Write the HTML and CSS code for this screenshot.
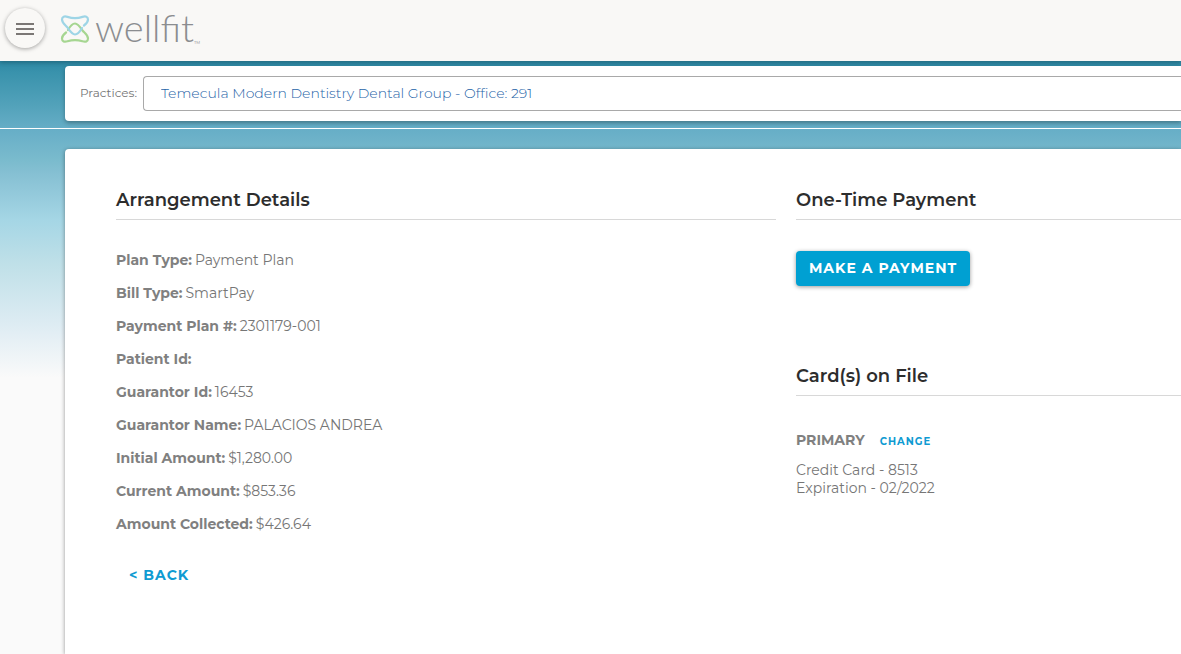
FILE: index.html
```html
<!DOCTYPE html>
<html lang="en">
<head>
<meta charset="utf-8">
<meta name="viewport" content="width=device-width, initial-scale=1">
<title>Wellfit - Arrangement Details</title>
<link rel="stylesheet" href="styles.css">
</head>
<body>
<header class="topbar">
  <button class="menu-button" type="button" aria-label="Open menu">
    <svg width="18" height="12" viewBox="0 0 18 12" aria-hidden="true"><path d="M0 0h18v2H0zM0 5h18v2H0zM0 10h18v2H0z" fill="#7b7775"/></svg>
  </button>
  <a class="brand" href="#" aria-label="wellfit home">
    <svg class="brand-mark" width="30" height="28" viewBox="0 0 30 28" fill="none" stroke-width="2.200" stroke-linecap="round" aria-hidden="true">
      <path stroke="#a6d691" d="M8 15C10 11.500 12 8.500 15 8.500C18 8.500 20.500 12.500 22.500 15.500C24.500 18 28 20 28 23.500C28 26.500 25.500 27.300 22.500 26.300C17 24.500 13 24.500 7.500 26.300C4.500 27.300 2 26.500 2 23.500C2 20.500 4 19 6 17.500"/>
      <path stroke="#9ed5e6" d="M22 13C20 16.500 18 19.500 15 19.500C12 19.500 9.500 15.500 7.500 12.500C5.500 10 2 8 2 4.500C2 1.500 4.500.9 7.500 1.900C13 3.700 17 3.700 22.500 1.900C25.500.9 28 1.500 28 4.500C28 7.500 26 9 24 10.500"/>
    </svg>
    <span class="brand-name">wellfit</span><span class="brand-tm">TM</span>
  </a>
</header>

<section class="practice-bar">
  <div class="practice-card">
    <label class="practice-label" for="practice">Practices:</label>
    <input class="practice-input" id="practice" type="text" value="Temecula Modern Dentistry Dental Group - Office: 291">
  </div>
</section>

<main class="panel">
  <section class="column">
    <h2 class="section-title">Arrangement Details</h2>
    <dl class="details">
      <div class="detail"><dt>Plan Type:</dt><dd>Payment Plan</dd></div>
      <div class="detail"><dt>Bill Type:</dt><dd>SmartPay</dd></div>
      <div class="detail"><dt>Payment Plan #:</dt><dd>2301179-001</dd></div>
      <div class="detail"><dt>Patient Id:</dt><dd></dd></div>
      <div class="detail"><dt>Guarantor Id:</dt><dd>16453</dd></div>
      <div class="detail"><dt>Guarantor Name:</dt><dd>PALACIOS ANDREA</dd></div>
      <div class="detail"><dt>Initial Amount:</dt><dd>$1,280.00</dd></div>
      <div class="detail"><dt>Current Amount:</dt><dd>$853.36</dd></div>
      <div class="detail"><dt>Amount Collected:</dt><dd>$426.64</dd></div>
    </dl>
    <button class="back-button" type="button">&lt; BACK</button>
  </section>
  <div class="column">
    <section class="payment">
      <h2 class="section-title">One-Time Payment</h2>
      <button class="pay-button" type="button">MAKE A PAYMENT</button>
    </section>
    <section>
      <h2 class="section-title">Card(s) on File</h2>
      <div class="card-head">
        <h3 class="card-kind">PRIMARY</h3>
        <button class="change-button" type="button">CHANGE</button>
      </div>
      <p class="card-info">Credit Card - 8513<br>Expiration - 02/2022</p>
    </section>
  </div>
</main>
</body>
</html>
```
FILE: styles.css
```css
* {
  box-sizing: border-box;
}

body {
  display: flex;
  flex-direction: column;
  min-height: 100vh;
  margin: 0;
  font-family: Montserrat, Inter, "Open Sans", sans-serif;
  font-size: 14px;
  line-height: 18px;
  color: #767676;
  background: #fafafa linear-gradient(#2b87a3 60px, #3992ac 72px, #52a2ba 105px, #67aec7 130px, #7abbcd 160px, #86c0d3 174px, #a5d6e5 220px, #c0e0e8 265px, #deecf3 325px, #fafafa 378px) no-repeat;
}

button,
input {
  font-family: inherit;
}

h2,
h3,
p,
dl,
dd {
  margin: 0;
}

.topbar {
  display: flex;
  align-items: center;
  gap: 15px;
  height: 61px;
  padding: 0 5px 5px;
  background: #f9f8f6;
  box-shadow: 0 2px 4px rgba(0, 0, 0, 0.2);
}

.menu-button {
  display: grid;
  place-items: center;
  width: 40px;
  height: 40px;
  padding: 2px 0 0;
  border: 0;
  border-radius: 50%;
  background: #f9f8f6;
  box-shadow: 0 1px 4px rgba(0, 0, 0, 0.35);
}

.brand {
  display: flex;
  align-items: center;
  padding-bottom: 2px;
  color: #8b8d90;
  text-decoration: none;
}

.brand-mark {
  margin: 4px 5px 0 0;
}

.brand-name {
  font-family: Lato, sans-serif;
  font-size: 38px;
  font-weight: 300;
  line-height: 48px;
}

.brand-tm {
  align-self: flex-end;
  padding-bottom: 4px;
  font-size: 4px;
  line-height: 8px;
}

.practice-bar {
  padding: 5px 0 7px 65px;
  border-bottom: 1px solid #fff;
}

.practice-card {
  display: flex;
  align-items: center;
  gap: 6px;
  padding: 10px 0 10px 15px;
  border-radius: 4px 0 0 4px;
  background: #fff;
  box-shadow: 0 2px 4px rgba(0, 0, 0, 0.3);
}

.practice-label {
  padding-bottom: 2px;
  font-size: 12px;
}

.practice-input {
  flex: 1;
  min-width: 0;
  height: 35px;
  padding: 0 17px 2px;
  border: 1px solid #a9a9a9;
  border-right: 0;
  border-radius: 4px 0 0 4px;
  color: #1f64a8;
  font-size: 14px;
  font-weight: 300;
  background: #fff;
}

.panel {
  flex: 1;
  display: grid;
  grid-template-columns: 12fr 7fr;
  gap: 20px;
  margin: 20px 0 0 65px;
  padding: 40px 0 40px 51px;
  border-radius: 4px 0 0 0;
  background: #fff;
  box-shadow: 0 1px 4px rgba(0, 0, 0, 0.4);
}

.section-title {
  padding-bottom: 8px;
  border-bottom: 1px solid #d8d8d8;
  color: #2d2d2d;
  font-size: 18px;
  font-weight: 600;
  line-height: 22px;
}

.details {
  display: grid;
  gap: 15px;
  padding-top: 31px;
}

.detail {
  display: flex;
  gap: 3px;
}

.detail dt {
  color: #808080;
  font-weight: 700;
}

.back-button,
.change-button {
  padding: 0;
  border: 0;
  color: #0f9bd2;
  background: none;
  font-weight: 700;
}

.back-button {
  margin: 33px 0 0 13px;
  font-size: 14px;
  line-height: 18px;
  letter-spacing: 1px;
}

.pay-button {
  height: 35px;
  margin-top: 31px;
  padding: 0 13px 1px;
  border: 0;
  border-radius: 4px;
  color: #fff;
  background: #00a0d2;
  box-shadow: 0 1px 4px rgba(0, 0, 0, 0.4);
  font-size: 14px;
  font-weight: 700;
  letter-spacing: 1px;
}

.payment {
  padding-bottom: 79px;
}

.card-head {
  display: flex;
  align-items: center;
  gap: 15px;
  padding: 35px 0 12px;
}

.card-kind {
  color: #808080;
  font-size: 14px;
  font-weight: 700;
}

.change-button {
  padding-top: 2px;
  font-size: 10px;
  letter-spacing: 1px;
}
```
